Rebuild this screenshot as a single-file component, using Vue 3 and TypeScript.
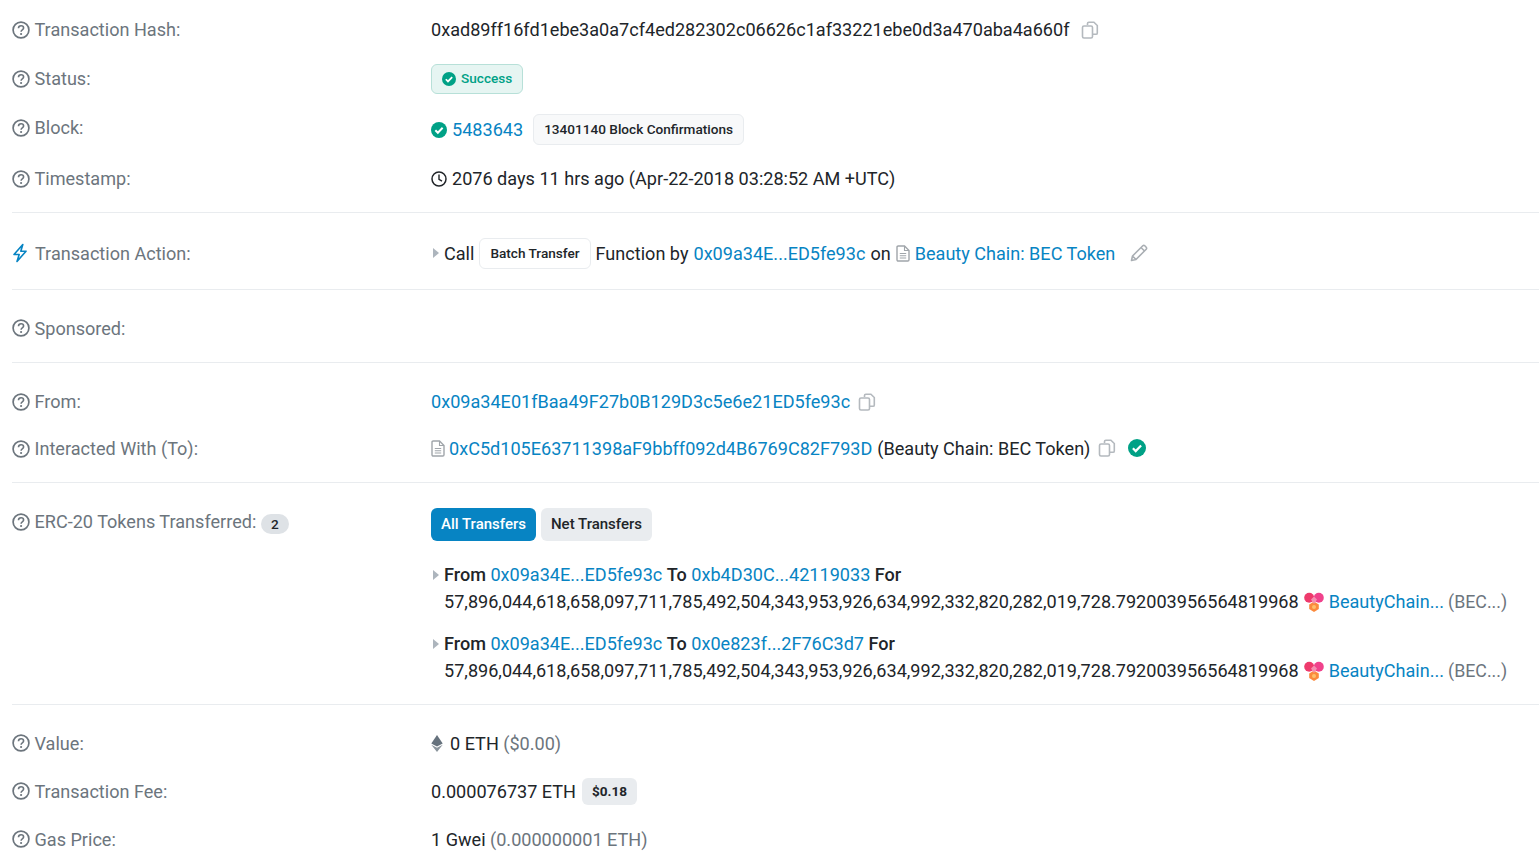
<template>
  <div class="page">
    <svg width="0" height="0" class="defs">
      <defs>
        <symbol id="q" viewBox="0 0 18 18">
          <circle cx="9" cy="9" r="7.900" fill="none" stroke="currentColor" stroke-width="1.700" />
          <path d="M6.500 7.200c0-1.500 1.100-2.400 2.600-2.400s2.500.9 2.500 2.200c0 1.900-2.500 1.900-2.500 3.700" fill="none" stroke="currentColor" stroke-width="1.600" />
          <circle cx="9.100" cy="13" r="1.100" fill="currentColor" />
        </symbol>
        <symbol id="copy" viewBox="0 0 18 18">
          <path d="M6.500 4V2.600c0-.9.600-1.400 1.400-1.400h5l3.400 3.300v7.400c0 .8-.6 1.400-1.400 1.400H12" fill="none" stroke="currentColor" stroke-width="1.600" />
          <rect x="1.500" y="5" width="10" height="12" rx="1.500" fill="#fff" stroke="currentColor" stroke-width="1.600" />
        </symbol>
        <symbol id="check" viewBox="0 0 18 18">
          <circle cx="9" cy="9" r="9" fill="currentColor" />
          <path d="M4.900 9.300l2.800 2.800 5.400-5.600" fill="none" stroke="#fff" stroke-width="2.200" />
        </symbol>
        <symbol id="doc" viewBox="0 0 14 17">
          <path d="M1 2.200C1 1.500 1.500 1 2.200 1h6.300L13 5.500v9.300c0 .7-.5 1.200-1.200 1.200H2.200c-.7 0-1.200-.5-1.200-1.200z" fill="none" stroke="currentColor" stroke-width="1.400" />
          <path d="M8.500 1v4.500H13M3.800 8.500h6.400M3.800 10.800h6.400M3.800 13h6.400" fill="none" stroke="currentColor" stroke-width="1.100" />
        </symbol>
        <symbol id="bec" viewBox="0 0 20 20">
          <path d="M10 9.500l4.800 3v4.600L10 20l-4.800-2.900v-4.600z" fill="#fb8a3c" />
          <circle cx="5.200" cy="5.800" r="5" fill="#ee3a6c" />
          <circle cx="14.800" cy="5.800" r="5" fill="#f0428c" />
          <path d="M10 4.500l3 3-3 4.500-3-4.500z" fill="#f58fb0" />
          <circle cx="10" cy="15" r="2" fill="#fdc06a" />
        </symbol>
      </defs>
    </svg>

    <section class="block first">
      <div class="row r49">
        <div class="label"><svg class="q"><use href="#q" /></svg>Transaction Hash:</div>
        <div class="value">
          0xad89ff16fd1ebe3a0a7cf4ed282302c06626c1af33221ebe0d3a470aba4a660f
          <svg class="copy hash-copy"><use href="#copy" /></svg>
        </div>
      </div>
      <div class="row r49">
        <div class="label"><svg class="q"><use href="#q" /></svg>Status:</div>
        <div class="value">
          <span class="success"><svg class="check-sm"><use href="#check" /></svg>Success</span>
        </div>
      </div>
      <div class="row r51">
        <div class="label lift"><svg class="q"><use href="#q" /></svg>Block:</div>
        <div class="value drop">
          <svg class="check"><use href="#check" /></svg>
          <a class="block-no">5483643</a>
          <span class="pill conf">13401140 Block Confirmations</span>
        </div>
      </div>
      <div class="row r49">
        <div class="label"><svg class="q"><use href="#q" /></svg>Timestamp:</div>
        <div class="value">
          <svg class="clock" viewBox="0 0 16 16"><circle cx="8" cy="8" r="7" fill="none" stroke="currentColor" stroke-width="1.500" /><path d="M8 3.500V8.300l3 1.800" fill="none" stroke="currentColor" stroke-width="1.400" /></svg>
          <span class="ts">2076 days 11 hrs ago (Apr-22-2018 03:28:52 AM +UTC)</span>
        </div>
      </div>
    </section>

    <section class="block action">
      <div class="row r72">
        <div class="label">
          <svg class="bolt" viewBox="0 0 16 20"><path d="M10.800 1.500L2 11.500h5.200L5 18.500l9-10.300H8.800z" fill="none" stroke="currentColor" stroke-width="1.600" stroke-linejoin="round" /></svg>
          <span class="action-text">Transaction Action:</span>
        </div>
        <div class="value">
          <span class="caret"></span>
          <span>Call</span>
          <span class="pill batch">Batch Transfer</span>
          <span class="fn">Function by</span>
          <a class="fn">0x09a34E...ED5fe93c</a>
          <span class="fn">on</span>
          <svg class="doc doc-on"><use href="#doc" /></svg>
          <a class="token">Beauty Chain: BEC Token</a>
          <svg class="pencil" viewBox="0 0 18 18"><path d="M1.500 16.500l1-4.500L12.800 1.800c.6-.6 1.400-.6 2 0l1.400 1.400c.6.6.6 1.400 0 2L6 15.500zM2.500 12l3.500 3.500M11 3.500l3.500 3.500" fill="none" stroke="currentColor" stroke-width="1.600" stroke-linejoin="round" /></svg>
        </div>
      </div>
    </section>

    <section class="block sponsored">
      <div class="row r68">
        <div class="label"><svg class="q"><use href="#q" /></svg>Sponsored:</div>
        <div class="value"></div>
      </div>
    </section>

    <section class="block pad-from">
      <div class="row r47">
        <div class="label"><svg class="q"><use href="#q" /></svg>From:</div>
        <div class="value">
          <a>0x09a34E01fBaa49F27b0B129D3c5e6e21ED5fe93c</a>
          <svg class="copy from-copy"><use href="#copy" /></svg>
        </div>
      </div>
      <div class="row r47">
        <div class="label"><svg class="q"><use href="#q" /></svg>Interacted With (To):</div>
        <div class="value">
          <svg class="doc to-doc"><use href="#doc" /></svg>
          <a class="to-link">0xC5d105E63711398aF9bbff092d4B6769C82F793D</a>
          <span class="to-name">(Beauty Chain: BEC Token)</span>
          <svg class="copy to-copy"><use href="#copy" /></svg>
          <svg class="check to-check"><use href="#check" /></svg>
        </div>
      </div>
    </section>

    <section class="block transfers">
      <div class="row top">
        <div class="label erc">
          <svg class="q"><use href="#q" /></svg>ERC-20 Tokens Transferred:
          <span class="count">2</span>
        </div>
        <div class="value stack">
          <div class="tabs">
            <span class="tab on">All Transfers</span>
            <span class="tab">Net Transfers</span>
          </div>
          <div v-for="t in transfers" :key="t" class="transfer">
            <span class="caret"></span>
            <div class="transfer-body">
              <div>
                <b>From</b> <a>0x09a34E...ED5fe93c</a> <b>To</b> <a>{{ t }}</a> <b>For</b>
              </div>
              <div class="amount">
                57,896,044,618,658,097,711,785,492,504,343,953,926,634,992,332,820,282,019,728.792003956564819968
                <svg class="bec"><use href="#bec" /></svg>
                <a>BeautyChain...</a>
                <span class="muted sym">(BEC...)</span>
              </div>
            </div>
          </div>
        </div>
      </div>
    </section>

    <section class="block last">
      <div class="row r48">
        <div class="label"><svg class="q"><use href="#q" /></svg>Value:</div>
        <div class="value">
          <svg class="eth" viewBox="0 0 12 17"><path d="M6 0L.3 8.500 6 11.500l5.700-3z" fill="#66727d" /><path d="M.3 9.800L6 17l5.700-7.200L6 12.800z" fill="#8a949c" /></svg>
          <span>0 ETH <span class="muted">($0.00)</span></span>
        </div>
      </div>
      <div class="row r48">
        <div class="label"><svg class="q"><use href="#q" /></svg>Transaction Fee:</div>
        <div class="value">
          <span>0.000076737 ETH</span>
          <span class="fee">$0.18</span>
        </div>
      </div>
      <div class="row r48">
        <div class="label"><svg class="q"><use href="#q" /></svg>Gas Price:</div>
        <div class="value">
          <span>1 Gwei <span class="muted">(0.000000001 ETH)</span></span>
        </div>
      </div>
    </section>
  </div>
</template>

<script setup lang="ts">
const transfers: string[] = ['0xb4D30C...42119033', '0x0e823f...2F76C3d7']
</script>

<style>
html,
body {
  margin: 0;
  background: #fff;
  overflow: hidden;
}
</style>

<style scoped>
.page {
  height: 866px;
  overflow: hidden;
  padding-left: 12px;
  font-family: Roboto, "Liberation Sans", sans-serif;
  font-size: 18.08px;
  line-height: 27px;
  color: #212529;
}
.defs {
  position: absolute;
}
.block {
  border-bottom: 1px solid #e9ecef;
}
.first {
  padding: 5px 0 9px;
}
.action {
  padding-top: 4px;
}
.sponsored {
  padding-top: 4px;
}
.last {
  border-bottom: 0;
  padding-top: 14px;
}
.pad-from {
  padding: 15px 0 10px;
}
.row {
  display: grid;
  grid-template-columns: 419px 1fr;
  align-items: center;
}
.row.top {
  align-items: start;
}
.r47 { height: 47px; }
.r48 { height: 48px; }
.r49 { height: 49px; }
.r51 { height: 51px; }
.r68 { height: 68px; }
.r72 { height: 72px; }
.label {
  display: flex;
  align-items: center;
  color: #6c757d;
}
.lift {
  position: relative;
  top: -1px;
}
.drop {
  position: relative;
  top: 1px;
}
.q {
  width: 18px;
  height: 18px;
  margin: 0 5px 0 -0.5px;
  color: #6c757d;
  flex: none;
}
.value {
  display: flex;
  align-items: center;
  white-space: nowrap;
}
a {
  color: #0784c3;
}
.copy {
  width: 18px;
  height: 18px;
  color: #b4b9be;
  flex: none;
}
.hash-copy {
  margin-left: 12px;
}
.from-copy {
  margin-left: 8px;
}
.to-copy {
  margin: -2px 0 0 8px;
}
.to-check {
  margin: -2px 0 0 12px;
}
.success {
  display: inline-flex;
  align-items: center;
  height: 30px;
  box-sizing: border-box;
  padding: 0 10px;
  border: 1px solid #b7e0d8;
  border-radius: 6px;
  background: #e6f5f2;
  color: #00a186;
  font-size: 13.6px;
  font-weight: 500;
}
.check-sm {
  width: 14px;
  height: 14px;
  margin-right: 5px;
  color: #00a186;
}
.check {
  width: 16px;
  height: 16px;
  color: #00a186;
  flex: none;
}
.to-check {
  width: 18px;
  height: 18px;
}
.block-no {
  margin-left: 5px;
}
.pill {
  display: inline-flex;
  align-items: center;
  box-sizing: border-box;
  border: 1px solid #e9ecef;
  border-radius: 6px;
  background: #f8f9fa;
  font-size: 13.6px;
  font-weight: 500;
  color: #212529;
}
.conf {
  height: 31px;
  padding: 0 10px;
  margin-left: 10px;
}
.clock {
  width: 16px;
  height: 16px;
  margin-right: 5px;
  color: #212529;
}
.bolt {
  width: 16px;
  height: 20px;
  margin-right: 7px;
  color: #0784c3;
}
.caret {
  display: inline-block;
  width: 0;
  height: 0;
  flex: none;
  margin: 0 5px 0 2px;
  border-left: 6px solid #adb5bd;
  border-top: 5px solid transparent;
  border-bottom: 5px solid transparent;
}
.batch {
  height: 31px;
  padding: 0 10px;
  margin-left: 5px;
  background: #fff;
}
.fn {
  margin-left: 5px;
}
.doc {
  width: 14px;
  height: 17px;
  margin-right: 5px;
  color: #a0a5aa;
  flex: none;
}
.to-doc {
  margin-right: 4px;
}
.doc-on {
  margin-left: 5px;
}
.pencil {
  width: 18px;
  height: 18px;
  margin-left: 15px;
  color: #a9aeb3;
}
.to-name {
  margin-left: 5px;
}
.transfers {
  height: 222px;
  padding-top: 25px;
  box-sizing: border-box;
}
.count {
  display: inline-flex;
  align-items: center;
  justify-content: center;
  width: 28px;
  height: 20px;
  margin: 5px 0 0 4.500px;
  border-radius: 10px;
  background: #dee2e6;
  color: #212529;
  font-size: 13.6px;
  font-weight: 500;
}
.stack {
  display: block;
}
.tabs {
  display: flex;
  gap: 5px;
  margin-bottom: 20px;
}
.tab {
  display: flex;
  align-items: center;
  height: 33px;
  padding: 0 10px;
  border-radius: 6px;
  background: #e9ecef;
  font-size: 15px;
  font-weight: 500;
}
.tab.on {
  background: #0784c3;
  color: #fff;
}
.transfer {
  display: flex;
  align-items: flex-start;
  margin-bottom: 15px;
}
.transfer .caret {
  margin-top: 9px;
}
.transfer-body b {
  font-weight: 500;
}
.amount {
  display: flex;
  align-items: center;
  gap: 5px;
}
.sym {
  margin-left: -1px;
  font-size: 17.8px;
}
.bec {
  width: 20px;
  height: 20px;
  flex: none;
}
.muted {
  color: #6c757d;
}
.eth {
  width: 12px;
  height: 17px;
  margin-right: 7px;
}
.fee {
  display: inline-flex;
  align-items: center;
  height: 27px;
  margin-left: 6px;
  padding: 0 10px;
  border-radius: 6px;
  background: #e9ecef;
  font-size: 13.6px;
  font-weight: 700;
}
</style>
